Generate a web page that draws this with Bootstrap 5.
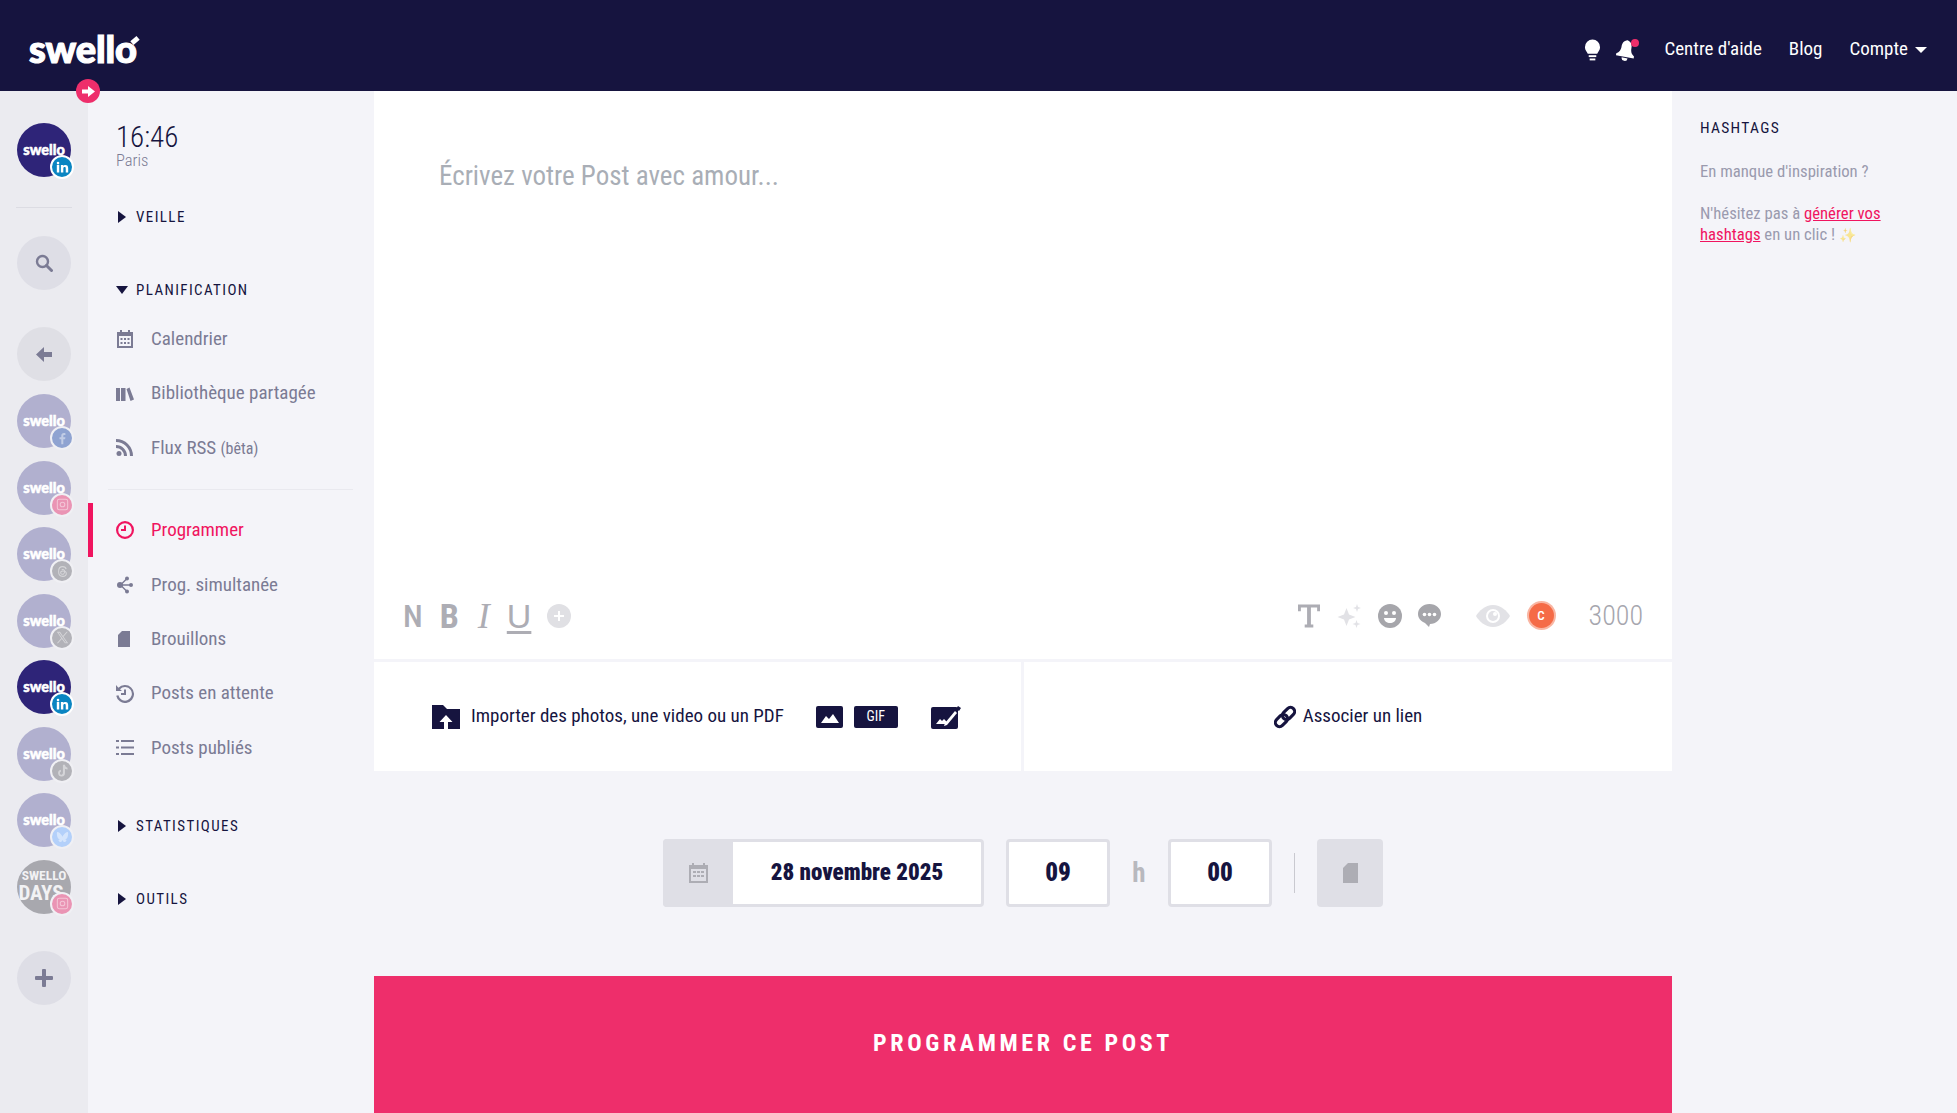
<!DOCTYPE html>
<html lang="fr">
<head>
  <meta charset="UTF-8" />
  <meta name="viewport" content="width=device-width, initial-scale=1" />
  <title>Swello</title>
  <link href="https://cdn.jsdelivr.net/npm/bootstrap@5.3.2/dist/css/bootstrap.min.css" rel="stylesheet">
  <style>
    :root { --ink: #16143f; --rose: #ee2e6b; --rose-text: #f0145f; --muted: #7b7b94; --pale: #f4f4f9; }
    body { background-color: var(--pale); color: var(--ink); font-family: "Roboto Condensed", Roboto, "Liberation Sans", sans-serif; font-stretch: 75%; overflow: hidden; }
    svg { display: block; fill: currentColor; }

    .top-bar { height: 91px; background: #16143f; padding: 8px 30px 0 29px; position: relative; }
    .brand-word { font-family: Lato, sans-serif; font-stretch: 100%; font-weight: 900; font-size: 38px; letter-spacing: -.2px; -webkit-text-stroke: 1.2px #fff; color: #fff; line-height: 1; position: relative; margin-top: -4px; }
    .brand-word::after { content: ""; position: absolute; right: -2px; top: 9px; width: 8px; height: 5px; background: #fff; transform: rotate(-40deg); }
    .top-link { color: #fff; font-size: 19px; text-decoration: none; }
    .top-caret { border-top: 6px solid #fff; border-left: 6px solid transparent; border-right: 6px solid transparent; margin-left: 7px; display: inline-block; vertical-align: 2px; }
    .toggle-dot { position: absolute; left: 76px; top: 79px; width: 24px; height: 24px; border-radius: 50%; background: var(--rose); color: #fff; z-index: 5; }

    .app-body { height: 1022px; }
    .acc-rail { width: 88px; background: #ebebf0; padding-top: 32px; flex: none; }
    .rail-sep { width: 56px; height: 1px; background: #dcdce3; margin: 30px auto 28px; }
    .rail-round { width: 54px; height: 54px; border-radius: 50%; background: #dedee6; color: #7b7b94; margin: 0 auto; }
    .rail-back { margin: 37px auto 13px; background: #dfdfe5; }
    .rail-add { margin-top: 37px; }
    .acc-item { width: 54px; height: 54px; margin: 0 auto 12.5px; position: relative; }
    .acc-disc { width: 54px; height: 54px; border-radius: 50%; background: #2e2478; color: #fff; overflow: hidden; font-family: Lato, sans-serif; font-stretch: 100%; font-weight: 900; font-size: 14.5px; -webkit-text-stroke: .5px #fff; }
    .acc-off .acc-disc { background: #b1b0cf; }
    .acc-days { background: #a8a8ae !important; flex-direction: column; font-family: "Roboto Condensed", Roboto, sans-serif; font-stretch: 75%; font-weight: 700; line-height: 1; -webkit-text-stroke: 0; color: #f2f2f4; }
    .days-a { font-size: 13.500px; }
    .days-b { font-size: 21px; margin-left: -6px; }
    .acc-net { position: absolute; right: -3px; bottom: -2px; width: 24px; height: 24px; border-radius: 50%; border: 2.5px solid #fff; color: #fff; }
    .acc-off .acc-net { border-color: #f0f0f4; }
    .acc-off .acc-net svg { opacity: .45; }

    .side-menu { width: 285px; padding: 32px 20px 0 27px; flex: none; }
    .clock-time { font-size: 29px; font-weight: 300; line-height: 29px; margin-left: 1px; }
    .clock-city { font-size: 16.5px; font-weight: 300; line-height: 18px; color: var(--muted); margin-left: 1px; }
    .menu-head { display: flex; align-items: center; font-size: 15px; letter-spacing: 1.4px; height: 20px; color: var(--ink); }
    .menu-head i { width: 21px; flex: none; display: block; }
    .arrow-right { margin-left: 3px; border-left: 8px solid var(--ink); border-top: 6px solid transparent; border-bottom: 6px solid transparent; width: 0 !important; margin-right: 10px; }
    .arrow-down { margin-left: 1px; border-top: 8px solid var(--ink); border-left: 6px solid transparent; border-right: 6px solid transparent; width: 0 !important; margin-right: 8px; }
    .menu-row { height: 54.4px; display: flex; align-items: center; font-size: 19px; color: var(--muted); position: relative; text-decoration: none; padding-left: 1px; }
    .menu-row span.ico { width: 35px; flex: none; }
    .menu-row small { font-size: 16px; }
    .menu-on { color: var(--rose-text); }
    .menu-on::before { content: ""; position: absolute; left: -27px; top: 0; width: 5px; height: 54px; background: var(--rose-text); }
    .menu-sep { height: 1px; background: #e9e9ef; margin: 14px 0 13px -7px; }

    .main-col { width: 1298px; margin-left: 1px; flex: none; }
    .compose-box { background: #fff; height: 680px; display: flex; flex-direction: column; }
    .compose-text { height: 495px; padding: 67px 65px 0; font-size: 27px; line-height: 36px; color: #a9aeb6; flex: none; }
    .compose-tools { height: 76px; flex: none; padding: 0 29px 14px 29px; color: #adadb4; border-bottom: 3px solid var(--pale); }
    .fmt-letter { font-size: 32px; line-height: 1; }
    .fmt-n { font-weight: 500; }
    .fmt-b { font-stretch: 100%; font-weight: 700; font-size: 34px; margin-left: 17px; }
    .fmt-i { font-family: "Liberation Serif", serif; font-stretch: 100%; font-style: italic; font-size: 36px; margin-left: 19px; }
    .fmt-u { font-family: "Liberation Sans", sans-serif; font-stretch: 100%; font-size: 34px; margin-left: 17px; text-decoration: underline; text-decoration-thickness: 2.5px; text-underline-offset: 3px; }
    .count-left { font-size: 28px; font-weight: 300; color: #a6a6ae; margin-left: 35px; }
    .c-dot { width: 25px; height: 25px; border-radius: 50%; background: #f56b47; box-shadow: 0 0 0 2px #f9b6a3; color: #fff; font-size: 13px; font-weight: 500; }
    .attach-row { height: 109px; flex: none; }
    .attach-cell { color: var(--ink); font-size: 19px; }
    .attach-a { width: 650px; padding-left: 58px; border-right: 3px solid var(--pale); }
    .gif-tag { width: 44px; height: 22px; background: var(--ink); color: #fff; font-size: 14px; border-radius: 2px; margin-left: 11px; }
    .sched-row { height: 205px; padding: 0 0 1px 0; }
    .sched-box { height: 68px; background: #fff; border: 3px solid #dfdfe6; border-radius: 4px; font-weight: 900; font-size: 25px; color: var(--ink); }
    .sched-date { width: 321px; font-size: 23px; }
    .sched-cal { width: 70px; height: 68px; background: #dfdfe6; color: #adadb4; margin: -3px 0 -3px -3px; border-radius: 4px 0 0 4px; }
    .sched-num { width: 104px; }
    .sched-h { width: 58px; text-align: center; font-size: 27px; font-weight: 700; color: #b8b8be; }
    .sched-bar { width: 1px; height: 40px; background: #c9c9d0; margin: 0 22px; }
    .sched-draft { width: 66px; height: 68px; background: #dfdfe6; border-radius: 4px; color: #adadb4; }
    .go-btn { height: 137px; background: var(--rose); color: #fff; border: 0; border-radius: 0; width: 100%; font-size: 24px; font-weight: 700; letter-spacing: 3.6px; padding-bottom: 10px; }
    .go-btn:hover { background: var(--rose); color: #fff; }

    .tag-panel { padding: 27px 30px 0 28px; font-size: 16.7px; line-height: 21px; color: #9a9aae; }
    .tag-title { font-size: 15.5px; letter-spacing: 1.3px; color: var(--ink); line-height: 20px; margin-bottom: 23px; }
    .tag-panel a { color: var(--rose-text); }
    .tag-panel p { margin-bottom: 21px; }
  </style>
</head>
<body>
  <nav class="top-bar d-flex align-items-center justify-content-between">
    <div class="brand-word">swello</div>
    <div class="d-flex align-items-center">
      <svg width="17" height="22" viewBox="0 0 18 22" class="text-white"><path d="M9 0a8 8 0 0 0-8 8c0 3 2 4.500 3 7h10c1-2.500 3-4 3-7a8 8 0 0 0-8-8z"/><rect x="5" y="16.500" width="8" height="2"/><rect x="6" y="20" width="6" height="2"/></svg>
      <svg width="24" height="23" viewBox="0 0 24 23" class="text-white" style="margin-left:15px"><g transform="rotate(10 10 12)"><path d="M10 2c-4 1-5 4-5 7 0 4-1 6-4 8v2h18v-2c-3-2-4-4-4-8 0-3-1-6-5-7z"/><path d="M7 20a3 3 0 0 0 6 0z"/></g><circle cx="19" cy="5" r="4" fill="#ee2e6b"/></svg>
      <a class="top-link ms-4" href="#">Centre d'aide</a>
      <a class="top-link" style="margin-left:27px" href="#">Blog</a>
      <a class="top-link" style="margin-left:27px" href="#">Compte<span class="top-caret"></span></a>
    </div>
    <div class="toggle-dot d-flex align-items-center justify-content-center">
      <svg width="13" height="11" viewBox="0 0 13 11"><path d="M0 3.500h6V0l7 5.500L6 11V7.500H0z"/></svg>
    </div>
  </nav>

  <div class="app-body d-flex">
    <aside class="acc-rail">
      <div id="acc-top"></div>
      <div class="rail-sep"></div>
      <div class="rail-round d-flex align-items-center justify-content-center">
        <svg width="18" height="18" viewBox="0 0 18 18" fill="none"><circle cx="7.500" cy="7.500" r="5.500" fill="none" stroke="currentColor" stroke-width="2.400"/><path d="M11.500 11.500l5 5" stroke="currentColor" stroke-width="3" stroke-linecap="round"/></svg>
      </div>
      <div class="rail-round rail-back d-flex align-items-center justify-content-center">
        <svg width="16" height="15" viewBox="0 0 16 15"><path d="M16 5H8V0L0 7.500 8 15v-5h8z"/></svg>
      </div>
      <div id="acc-list"></div>
      <div class="rail-round rail-add d-flex align-items-center justify-content-center">
        <svg width="18" height="18" viewBox="0 0 18 18"><path d="M7 1a1 1 0 0 1 1-1h2a1 1 0 0 1 1 1v6h6a1 1 0 0 1 1 1v2a1 1 0 0 1-1 1h-6v6a1 1 0 0 1-1 1H8a1 1 0 0 1-1-1v-6H1a1 1 0 0 1-1-1V8a1 1 0 0 1 1-1h6z"/></svg>
      </div>
    </aside>

    <div class="side-menu">
      <div class="clock-time">16:46</div>
      <div class="clock-city">Paris</div>
      <div class="menu-head" style="margin-top:37px"><i class="arrow-right"></i>VEILLE</div>
      <div class="menu-head" style="margin-top:53px;margin-bottom:12px"><i class="arrow-down"></i>PLANIFICATION</div>
      <div id="menu-a"></div>
      <div class="menu-sep"></div>
      <div id="menu-b"></div>
      <div class="menu-head" style="margin-top:41px"><i class="arrow-right"></i>STATISTIQUES</div>
      <div class="menu-head" style="margin-top:53px"><i class="arrow-right"></i>OUTILS</div>
    </div>

    <main class="main-col">
      <div class="compose-box">
        <div class="compose-text">Écrivez votre Post avec amour...</div>
        <div class="compose-tools d-flex align-items-center justify-content-between">
          <div class="d-flex align-items-center">
            <span class="fmt-letter fmt-n">N</span>
            <span class="fmt-letter fmt-b">B</span>
            <span class="fmt-letter fmt-i">I</span>
            <span class="fmt-letter fmt-u">U</span>
            <svg style="margin-left:16px" width="24" height="24" viewBox="0 0 24 24"><circle cx="12" cy="12" r="12" fill="#e0e0e4"/><path d="M11 7h2v4h4v2h-4v4h-2v-4H7v-2h4z" fill="#fff"/></svg>
          </div>
          <div class="d-flex align-items-center">
            <svg width="22" height="24" viewBox="0 0 23 24"><path d="M0 0h23v7h-3V3h-6.500v18H16v3H7v-3h2.500V3H3v4H0z"/></svg>
            <svg style="margin-left:17px;color:#e2e2e6" width="25" height="24" viewBox="0 0 24 24"><path d="M9 4l2.500 6.500L18 13l-6.500 2.500L9 22l-2.500-6.500L0 13l6.500-2.500z"/><path d="M19.500 0l1 3 3 1-3 1-1 3-1-3-3-1 3-1zM19 16l1 3 3 1-3 1-1 3-1-3-3-1 3-1z"/></svg>
            <svg class="ms-3" width="24" height="24" viewBox="0 0 24 24" style="color:#a6a6ab"><circle cx="12" cy="12" r="12"/><circle cx="8" cy="9" r="2" fill="#fff"/><circle cx="16" cy="9" r="2" fill="#fff"/><path d="M6 14h12c0 3-3 5-6 5s-6-2-6-5z" fill="#fff"/></svg>
            <svg class="ms-3" width="23" height="24" viewBox="0 0 23 24" style="color:#a6a6ab"><path d="M11.500 0C18 0 23 4.500 23 10s-5 10-11 10l-1 3-4-4c-4-1.500-7-5-7-9C0 4.500 5 0 11.500 0z"/><circle cx="6.500" cy="10.500" r="1.800" fill="#fff"/><circle cx="11.500" cy="10.500" r="1.800" fill="#fff"/><circle cx="16.500" cy="10.500" r="1.800" fill="#fff"/></svg>
            <svg style="margin-left:35px;color:#e2e2e6" width="34" height="22" viewBox="0 0 34 22"><path d="M17 0c8 0 14 6 17 11-3 5-9 11-17 11S3 16 0 11C3 6 9 0 17 0z"/><circle cx="17" cy="11" r="7" fill="#fff"/><circle cx="17" cy="11" r="5" fill="#e2e2e6"/><circle cx="19" cy="9" r="2" fill="#fff"/></svg>
            <div class="c-dot d-flex align-items-center justify-content-center" style="margin-left:19px">C</div>
            <div class="count-left">3000</div>
          </div>
        </div>
        <div class="attach-row d-flex">
          <div class="attach-cell attach-a d-flex align-items-center">
            <svg width="28" height="24" viewBox="0 0 28 24"><path d="M0 0h11l4 4h13v20H0z"/><path d="M14 10l6.500 7H16v7h-4v-7H7.500z" fill="#fff"/></svg>
            <span style="margin-left:11px">Importer des photos, une video ou un PDF</span>
            <svg style="margin-left:32px" width="27" height="22" viewBox="0 0 27 22"><rect width="27" height="22" rx="2"/><path d="M5 17l5-7 3 3 4-5 6 9z" fill="#fff"/></svg>
            <div class="gif-tag d-flex align-items-center justify-content-center">GIF</div>
            <svg style="margin-left:33px" width="31" height="24" viewBox="0 0 31 24"><rect y="2" width="27" height="22" rx="2"/><path d="M5 19l4-5 2 2 2-2 3 3v2z" fill="#fff"/><path d="M14 18l-1 3 3-1 10-12-2-2z" fill="#fff"/><path d="M27 1l3 2-2 3-3-2z"/></svg>
          </div>
          <div class="attach-cell flex-grow-1 d-flex align-items-center justify-content-center">
            <svg width="22" height="24" viewBox="0 0 24 24" fill="none"><g transform="rotate(-45 12 12)" fill="none" stroke="currentColor" stroke-width="3.400"><rect x="-1" y="7.500" width="15" height="9" rx="4.500"/><rect x="10" y="7.500" width="15" height="9" rx="4.500"/></g></svg>
            <span style="margin-left:7px">Associer un lien</span>
          </div>
        </div>
      </div>
      <div class="sched-row d-flex align-items-center justify-content-center">
        <div class="sched-box sched-date d-flex align-items-center">
          <div class="sched-cal d-flex align-items-center justify-content-center">
            <svg width="19" height="20" viewBox="0 0 19 20"><path d="M0 2h3V0h2v2h9V0h2v2h3v18H0zM2 6v12h15V6z"/><path d="M4 8h3v2H4zM8 8h3v2H8zM12 8h3v2h-3zM4 12h3v2H4zM8 12h3v2H8zM12 12h3v2h-3z"/></svg>
          </div>
          <div class="flex-grow-1 text-center">28 novembre 2025</div>
        </div>
        <div class="sched-box sched-num d-flex align-items-center justify-content-center" style="margin-left:22px">09</div>
        <div class="sched-h">h</div>
        <div class="sched-box sched-num d-flex align-items-center justify-content-center">00</div>
        <div class="sched-bar"></div>
        <div class="sched-draft d-flex align-items-center justify-content-center">
          <svg width="15" height="20" viewBox="0 0 15 20"><path d="M5 0h10v20H0V5z"/></svg>
        </div>
      </div>
      <button class="btn go-btn" type="button">PROGRAMMER CE POST</button>
    </main>

    <aside class="tag-panel flex-grow-1">
      <div class="tag-title">HASHTAGS</div>
      <p>En manque d'inspiration ?</p>
      <p>N'hésitez pas à <a href="#">générer vos hashtags</a> en un clic ! <span style="font-size:14px;opacity:.5">✨</span></p>
    </aside>
  </div>

  <script src="https://cdn.jsdelivr.net/npm/bootstrap@5.3.2/dist/js/bootstrap.bundle.min.js"></script>
  <script>
    const netIcons = {
      linkedin: { bg: "#0a85c2", svg: '<path d="M1 5h3v9H1zM2.500 1a1.600 1.600 0 1 1 0 3.200 1.600 1.600 0 0 1 0-3.200zM6 5h3v1.300C9.500 5.500 10.500 5 11.500 5 14 5 15 6.500 15 9v5h-3V9.500C12 8 11.500 7.500 10.500 7.500S9 8.200 9 9.500V14H6z"/>' },
      facebook: { bg: "#8fa3d1", svg: '<path d="M9 15V9h2.200l.4-2.500H9V5c0-.8.3-1.300 1.300-1.300h1.300V1.500C11 1.400 10.400 1.300 9.800 1.300 7.800 1.300 6.500 2.500 6.500 4.700v1.800H4.300V9h2.200v6z"/>' },
      instagram: { bg: "#ea94b4", svg: '<path fill-rule="evenodd" d="M4 1h8a3 3 0 0 1 3 3v8a3 3 0 0 1-3 3H4a3 3 0 0 1-3-3V4a3 3 0 0 1 3-3zm0 1.300A1.700 1.700 0 0 0 2.300 4v8A1.700 1.700 0 0 0 4 13.700h8a1.700 1.700 0 0 0 1.700-1.700V4A1.700 1.700 0 0 0 12 2.300zM8 4.500a3.500 3.500 0 1 1 0 7 3.500 3.500 0 0 1 0-7zm0 1.300a2.200 2.200 0 1 0 0 4.400 2.200 2.200 0 0 0 0-4.400z"/>' },
      threads: { bg: "#b2b2b8", svg: '<path fill="none" stroke="#fff" stroke-width="1.300" d="M12.500 5C12 3 10.300 2 8.200 2 5 2 3.200 4.300 3.200 8s1.800 6 5 6c2.600 0 4.500-1.500 4.500-3.500S11 7.300 8.500 7.300 5.600 8.500 5.800 9.800 7.500 11.800 9 11.300s1.700-2.500 1.500-4S9 5 7 5.800"/>' },
      x: { bg: "#b2b2b8", svg: '<path d="M1 1h4l3.500 5L13 1h1.500L9.200 7 15 15h-4L7.200 9.800 2.500 15H1l5.500-6.200zm2 1l8.700 12h1.300L4.300 2z"/>' },
      tiktok: { bg: "#b2b2b8", svg: '<path d="M8.500 1H11c.2 2 1.500 3.300 3.200 3.500v2.300c-1.200 0-2.300-.4-3.200-1v5.200A4.200 4.200 0 1 1 6 7v2.400a1.900 1.900 0 1 0 2.500 1.700z"/>' },
      bluesky: { bg: "#b3d0fa", svg: '<path d="M8 7c-.7-1.500-3-4.500-5-5.500C1.500.800 1 1.500 1 3c0 1 .5 4 1 5 .5 1.500 2 2 3.500 1.800C3 10.300 2.300 11.500 4 13c2 1.800 3.300-.5 4-2 .7 1.500 2 3.800 4 2 1.700-1.500 1-2.700-1.500-3.200C12 10 13.500 9.500 14 8c.5-1 1-4 1-5 0-1.500-.5-2.200-2-1.500C11 2.500 8.700 5.500 8 7z"/>' }
    };

    function accItem(acc) {
      const net = netIcons[acc.net];
      const face = acc.days
        ? '<div class="acc-disc acc-days d-flex align-items-center justify-content-center"><span class="days-a">SWELLO</span><span class="days-b">DAYS</span></div>'
        : '<div class="acc-disc d-flex align-items-center justify-content-center">swello</div>';
      return `<div class="acc-item ${acc.off ? "acc-off" : ""}">${face}
        <div class="acc-net d-flex align-items-center justify-content-center" style="background:${net.bg}">
          <svg width="13" height="13" viewBox="0 0 16 16">${net.svg}</svg>
        </div></div>`;
    }

    const accounts = [
      { net: "facebook", off: true },
      { net: "instagram", off: true },
      { net: "threads", off: true },
      { net: "x", off: true },
      { net: "linkedin" },
      { net: "tiktok", off: true },
      { net: "bluesky", off: true },
      { net: "instagram", off: true, days: true }
    ];
    document.getElementById("acc-top").innerHTML = accItem({ net: "linkedin" });
    document.getElementById("acc-list").innerHTML = accounts.map(accItem).join("");

    const menuIcons = {
      cal: '<path d="M1 2h3V0h2v2h6V0h2v2h3v16H1zM3 6v10h12V6z"/><path d="M4.500 8h2v2h-2zM8 8h2v2H8zM11.500 8h2v2h-2zM4.500 12h2v2h-2zM8 12h2v2H8zM11.500 12h2v2h-2z"/>',
      lib: '<path d="M0 3h4v13H0zM5 3h4.500v13H5zM10.500 4l3-1.500 4.500 12-3.500 1.500z"/>',
      rss: '<circle cx="3" cy="14.500" r="2.500"/><path d="M0 6v3a8 8 0 0 1 8 8h3A11 11 0 0 0 0 6z"/><path d="M0 0v3a14 14 0 0 1 14 14h3A17 17 0 0 0 0 0z"/>',
      clock: '<path d="M9 0a9 9 0 1 1 0 18A9 9 0 0 1 9 0zm0 2.200a6.800 6.800 0 1 0 0 13.600A6.800 6.800 0 0 0 9 2.200z"/><path d="M8 4.500h2V10H5V8h3z"/>',
      share: '<circle cx="4" cy="9" r="3"/><circle cx="11" cy="2.500" r="2"/><circle cx="15" cy="9" r="2"/><circle cx="11" cy="15.500" r="2"/><path d="M3 8.300h12v1.400H3zM10.500 2l1 1-6 6 6 6-1 1-7-7z"/>',
      page: '<path d="M6 1h8v16H2V5z"/>',
      hist: '<path d="M9 0a9 9 0 1 1-8.800 10.800l2.200-.5A6.800 6.800 0 1 0 4 4.300L6 6H0V0l2.400 2.700A9 9 0 0 1 9 0z"/><path d="M8 4.500h2V10H5V8h3z"/>',
      list: '<path d="M0 1h3v2H0zM5 1h13v2H5zM0 7.500h3v2H0zM5 7.500h13v2H5zM0 14h3v2H0zM5 14h13v2H5z"/>'
    };
    const menuRow = (m) => `<a href="#" class="menu-row ${m.on ? "menu-on" : ""}"><span class="ico"><svg width="18" height="18" viewBox="0 0 18 18">${menuIcons[m.icon]}</svg></span><span>${m.label}</span></a>`;

    document.getElementById("menu-a").innerHTML = [
      { icon: "cal", label: "Calendrier" },
      { icon: "lib", label: "Bibliothèque partagée" },
      { icon: "rss", label: "Flux RSS <small>(bêta)</small>" }
    ].map(menuRow).join("");
    document.getElementById("menu-b").innerHTML = [
      { icon: "clock", label: "Programmer", on: true },
      { icon: "share", label: "Prog. simultanée" },
      { icon: "page", label: "Brouillons" },
      { icon: "hist", label: "Posts en attente" },
      { icon: "list", label: "Posts publiés" }
    ].map(menuRow).join("");
  </script>
</body>
</html>
